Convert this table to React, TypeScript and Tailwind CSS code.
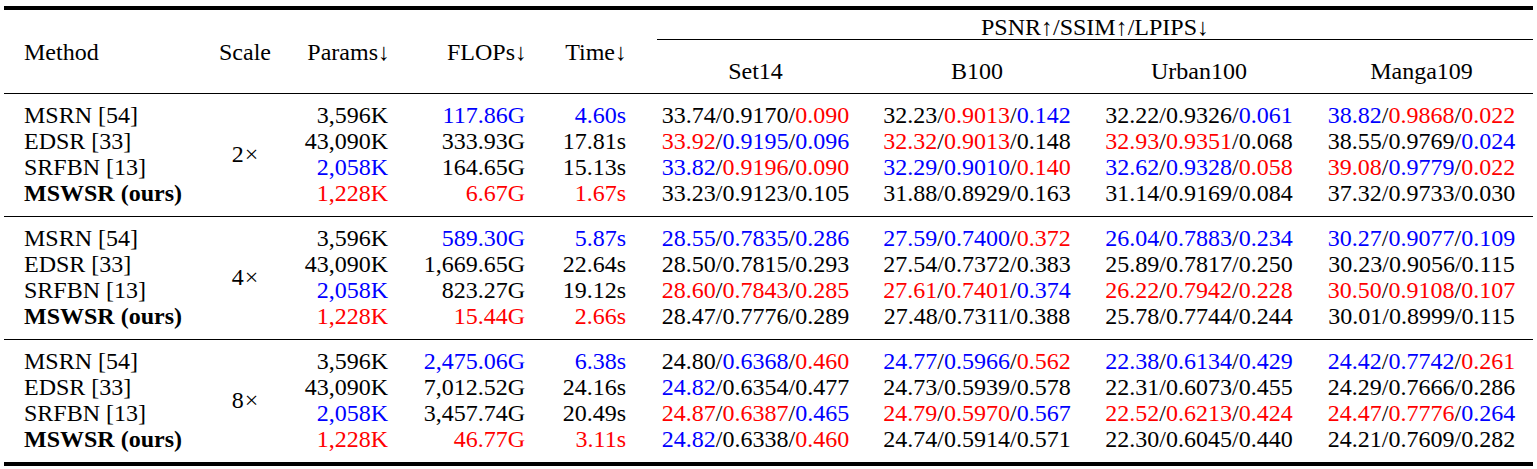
import React from "react";

type Color = "k" | "r" | "b";

const colorClass: Record<Color, string> = {
  k: "text-black",
  r: "text-[#ff0000]",
  b: "text-[#0000ff]",
};

// "33.74:k/0.9170:k/0.090:r"
function Metric({ spec }: { spec: string }) {
  const parts = spec.split("/");
  return (
    <span>
      {parts.map((p, i) => {
        const [v, c] = p.split(":");
        return (
          <React.Fragment key={i}>
            {i > 0 && <span className="text-black">/</span>}
            <span className={colorClass[c as Color]}>{v}</span>
          </React.Fragment>
        );
      })}
    </span>
  );
}

type Row = {
  method: string;
  bold?: boolean;
  params: [string, Color];
  flops: [string, Color];
  time: [string, Color];
  metrics: string[];
};

type Group = { scale: string; rows: Row[] };

const GROUPS: Group[] = [
  {
    scale: "2",
    rows: [
      {
        method: "MSRN [54]",
        params: ["3,596K", "k"],
        flops: ["117.86G", "b"],
        time: ["4.60s", "b"],
        metrics: ["33.74:k/0.9170:k/0.090:r", "32.23:k/0.9013:r/0.142:b", "32.22:k/0.9326:k/0.061:b", "38.82:b/0.9868:r/0.022:r"],
      },
      {
        method: "EDSR [33]",
        params: ["43,090K", "k"],
        flops: ["333.93G", "k"],
        time: ["17.81s", "k"],
        metrics: ["33.92:r/0.9195:b/0.096:b", "32.32:r/0.9013:r/0.148:k", "32.93:r/0.9351:r/0.068:k", "38.55:k/0.9769:k/0.024:b"],
      },
      {
        method: "SRFBN [13]",
        params: ["2,058K", "b"],
        flops: ["164.65G", "k"],
        time: ["15.13s", "k"],
        metrics: ["33.82:b/0.9196:r/0.090:r", "32.29:b/0.9010:b/0.140:r", "32.62:b/0.9328:b/0.058:r", "39.08:r/0.9779:b/0.022:r"],
      },
      {
        method: "MSWSR (ours)",
        bold: true,
        params: ["1,228K", "r"],
        flops: ["6.67G", "r"],
        time: ["1.67s", "r"],
        metrics: ["33.23:k/0.9123:k/0.105:k", "31.88:k/0.8929:k/0.163:k", "31.14:k/0.9169:k/0.084:k", "37.32:k/0.9733:k/0.030:k"],
      },
    ],
  },
  {
    scale: "4",
    rows: [
      {
        method: "MSRN [54]",
        params: ["3,596K", "k"],
        flops: ["589.30G", "b"],
        time: ["5.87s", "b"],
        metrics: ["28.55:b/0.7835:b/0.286:b", "27.59:b/0.7400:b/0.372:r", "26.04:b/0.7883:b/0.234:b", "30.27:b/0.9077:b/0.109:b"],
      },
      {
        method: "EDSR [33]",
        params: ["43,090K", "k"],
        flops: ["1,669.65G", "k"],
        time: ["22.64s", "k"],
        metrics: ["28.50:k/0.7815:k/0.293:k", "27.54:k/0.7372:k/0.383:k", "25.89:k/0.7817:k/0.250:k", "30.23:k/0.9056:k/0.115:k"],
      },
      {
        method: "SRFBN [13]",
        params: ["2,058K", "b"],
        flops: ["823.27G", "k"],
        time: ["19.12s", "k"],
        metrics: ["28.60:r/0.7843:r/0.285:r", "27.61:r/0.7401:r/0.374:b", "26.22:r/0.7942:r/0.228:r", "30.50:r/0.9108:r/0.107:r"],
      },
      {
        method: "MSWSR (ours)",
        bold: true,
        params: ["1,228K", "r"],
        flops: ["15.44G", "r"],
        time: ["2.66s", "r"],
        metrics: ["28.47:k/0.7776:k/0.289:k", "27.48:k/0.7311:k/0.388:k", "25.78:k/0.7744:k/0.244:k", "30.01:k/0.8999:k/0.115:k"],
      },
    ],
  },
  {
    scale: "8",
    rows: [
      {
        method: "MSRN [54]",
        params: ["3,596K", "k"],
        flops: ["2,475.06G", "b"],
        time: ["6.38s", "b"],
        metrics: ["24.80:k/0.6368:b/0.460:r", "24.77:b/0.5966:b/0.562:r", "22.38:b/0.6134:b/0.429:b", "24.42:b/0.7742:b/0.261:r"],
      },
      {
        method: "EDSR [33]",
        params: ["43,090K", "k"],
        flops: ["7,012.52G", "k"],
        time: ["24.16s", "k"],
        metrics: ["24.82:b/0.6354:k/0.477:k", "24.73:k/0.5939:k/0.578:k", "22.31:k/0.6073:k/0.455:k", "24.29:k/0.7666:k/0.286:k"],
      },
      {
        method: "SRFBN [13]",
        params: ["2,058K", "b"],
        flops: ["3,457.74G", "k"],
        time: ["20.49s", "k"],
        metrics: ["24.87:r/0.6387:r/0.465:b", "24.79:r/0.5970:r/0.567:b", "22.52:r/0.6213:r/0.424:r", "24.47:r/0.7776:r/0.264:b"],
      },
      {
        method: "MSWSR (ours)",
        bold: true,
        params: ["1,228K", "r"],
        flops: ["46.77G", "r"],
        time: ["3.11s", "r"],
        metrics: ["24.82:b/0.6338:k/0.460:r", "24.74:k/0.5914:k/0.571:k", "22.30:k/0.6045:k/0.440:k", "24.21:k/0.7609:k/0.282:k"],
      },
    ],
  },
];

const COLS = "grid grid-cols-[201px_80px_115px_137px_108px_221px_222px_222px_223px]";

export default function App() {
  return (
    <div className="w-[1537px] h-[469px] bg-white text-black font-['Liberation_Serif','Times_New_Roman',serif] text-[24px] leading-[26px] pt-[6px] pl-[4px]">
      <div className="w-[1529px] border-t-4 border-black">
        {/* Header */}
        <div className={`${COLS} grid-rows-[30px_53px] border-b border-black`}>
          <div className="row-span-2 self-center pl-[20px] pt-[1px]">Method</div>
          <div className="row-span-2 self-center text-center pt-[1px]">Scale</div>
          <div className="row-span-2 self-center text-right pr-[10px] pt-[1px]">Params↓</div>
          <div className="row-span-2 self-center text-right pr-[10px] pt-[1px]">FLOPs↓</div>
          <div className="row-span-2 self-center text-right pr-[18px] pt-[1px]">Time↓</div>
          <div className="col-span-4 ml-[12px] border-b border-black text-center pt-[4px]">PSNR↑/SSIM↑/LPIPS↓</div>
          <div className="text-center pt-[18px]">Set14</div>
          <div className="text-center pt-[18px]">B100</div>
          <div className="text-center pt-[18px]">Urban100</div>
          <div className="text-center pt-[18px]">Manga109</div>
        </div>

        {/* Body */}
        {GROUPS.map((g, gi) => (
          <div
            key={g.scale}
            className={`${COLS} grid-rows-[26px_26px_26px_26px] pt-[8px] pb-[10px] border-black ${
              gi === GROUPS.length - 1 ? "border-b-4" : "border-b"
            }`}
          >
            <div className="col-start-2 row-start-1 row-span-4 self-center text-center">
              {g.scale}
              <span className="ml-[1px]">×</span>
            </div>
            {g.rows.map((r) => (
              <React.Fragment key={r.method}>
                <div className={`pl-[20px] whitespace-nowrap ${r.bold ? "font-bold" : ""}`}>{r.method}</div>
                <div className={`text-right pr-[12px] ${colorClass[r.params[1]]}`}>{r.params[0]}</div>
                <div className={`text-right pr-[12px] ${colorClass[r.flops[1]]}`}>{r.flops[0]}</div>
                <div className={`text-right pr-[19px] ${colorClass[r.time[1]]}`}>{r.time[0]}</div>
                {r.metrics.map((m, i) => (
                  <div key={i} className="text-center whitespace-nowrap">
                    <Metric spec={m} />
                  </div>
                ))}
              </React.Fragment>
            ))}
          </div>
        ))}
      </div>
    </div>
  );
}
